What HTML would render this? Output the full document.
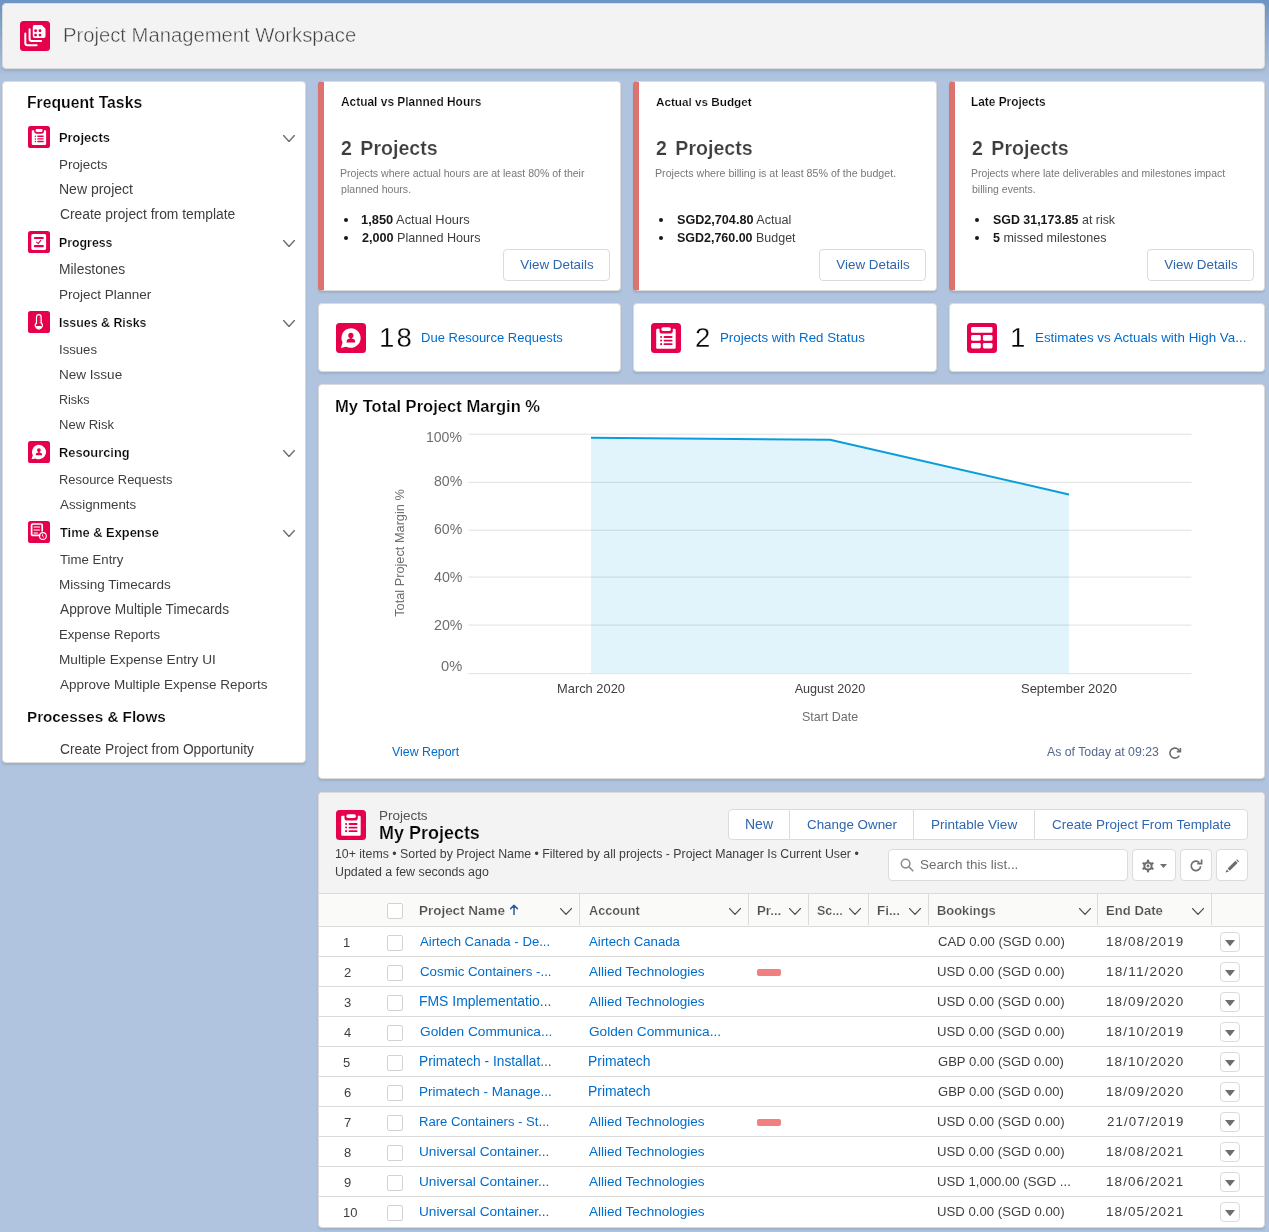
<!DOCTYPE html>
<html><head><meta charset="utf-8"><title>Project Management Workspace</title>
<style>
html,body{margin:0;padding:0;}
body{width:1269px;height:1232px;overflow:hidden;position:relative;font-family:"Liberation Sans",sans-serif;
background:linear-gradient(to bottom,#6c95c4 0px,#8fb0d6 40px,#b0c4df 80px,#b0c4df 100%);}
.t{position:absolute;white-space:nowrap;will-change:transform;}
.r{position:absolute;}
</style></head><body>
<div class="r" style="left:2px;top:3px;width:1263px;height:66px;background:#f3f3f3;border:1px solid #dddbda;border-radius:4px;box-sizing:border-box;box-shadow:0 2px 3px rgba(0,0,0,0.10);"></div>
<svg class="r" style="left:20px;top:21px" width="30" height="30" viewBox="0 0 30 30"><rect width="30" height="30" rx="3.5" fill="#e6004c"/>
<path d="M14.3 4 H21.8 L25.5 7.7 V15.2 a1.8 1.8 0 0 1 -1.8 1.8 H14.6 a1.8 1.8 0 0 1 -1.8 -1.8 V5.8 A1.8 1.8 0 0 1 14.3 4Z" fill="#fff"/>
<circle cx="15.6" cy="9.7" r="1.45" fill="#e6004c"/><circle cx="20" cy="9.7" r="1.45" fill="#e6004c"/>
<circle cx="15.6" cy="14.1" r="1.45" fill="#e6004c"/><circle cx="20" cy="14.1" r="1.45" fill="#e6004c"/>
<path d="M9.6 8.3 V17.8 a2.2 2.2 0 0 0 2.2 2.2 H21.1" fill="none" stroke="#fff" stroke-width="2" stroke-linecap="round"/>
<path d="M5.3 12.4 V22.1 a2.2 2.2 0 0 0 2.2 2.2 H16.6" fill="none" stroke="#fff" stroke-width="2" stroke-linecap="round"/></svg>
<div class="t" style="top:22px;font-size:20.24px;line-height:26px;color:#3e3e3c;left:62.60px;-webkit-text-stroke:0.45px #f3f3f3;">Project Management Workspace</div>
<div class="r" style="left:2px;top:81px;width:304px;height:682px;background:#fff;border:1px solid #dddbda;border-radius:4px;box-shadow:0 2px 2px rgba(0,0,0,0.10);box-sizing:border-box;"></div>
<div class="t" style="top:93px;font-size:15.74px;line-height:20px;color:#080707;font-weight:700;left:26.90px;-webkit-text-stroke:0.2px #fff;">Frequent Tasks</div>
<svg class="r" style="left:28px;top:126px" width="22" height="22" viewBox="0 0 22 22"><rect width="22" height="22" rx="2.6" fill="#e6004c"/>
<path d="M4.6 4.3 H6.2 V5.6 A2.1 2.1 0 0 0 8.3 7.7 H13.9 A2.1 2.1 0 0 0 16 5.6 V4.3 H17.3 A0.8 0.8 0 0 1 18.1 5.1 V18.1 A0.8 0.8 0 0 1 17.3 18.9 H4.6 A0.8 0.8 0 0 1 3.8 18.1 V5.1 A0.8 0.8 0 0 1 4.6 4.3Z" fill="#fff"/>
<rect x="7.6" y="3.1" width="7" height="2.8" rx="1.3" fill="#fff"/>
<circle cx="7.4" cy="10.3" r="0.75" fill="#e6004c"/><circle cx="7.4" cy="12.9" r="0.75" fill="#e6004c"/><circle cx="7.4" cy="15.5" r="0.75" fill="#e6004c"/>
<rect x="9.2" y="9.6" width="6.6" height="1.4" rx="0.7" fill="#e6004c"/><rect x="9.2" y="12.2" width="6.6" height="1.4" rx="0.7" fill="#e6004c"/><rect x="9.2" y="14.8" width="6.6" height="1.4" rx="0.7" fill="#e6004c"/></svg>
<div class="t" style="top:129px;font-size:12.9px;line-height:17px;color:#080707;font-weight:700;left:59.10px;-webkit-text-stroke:0.2px #fff;">Projects</div>
<svg class="r" style="left:283px;top:134.9px" width="12" height="7" viewBox="0 0 12 7"><path d="M0.6 0.6 L6.0 6.4 L11.4 0.6" fill="none" stroke="#706e6b" stroke-width="1.4" stroke-linecap="round" stroke-linejoin="round"/></svg>
<div class="t" style="top:156px;font-size:13.39px;line-height:17px;color:#3e3e3c;left:59.10px;">Projects</div>
<div class="t" style="top:180px;font-size:14.0px;line-height:18px;color:#3e3e3c;left:59.10px;">New project</div>
<div class="t" style="top:205px;font-size:13.83px;line-height:18px;color:#3e3e3c;left:60.10px;">Create project from template</div>
<svg class="r" style="left:28px;top:231px" width="22" height="22" viewBox="0 0 22 22"><rect width="22" height="22" rx="2.6" fill="#e6004c"/>
<rect x="3.3" y="3.1" width="14.8" height="15.8" rx="1.6" fill="#fff"/>
<rect x="5.8" y="5.9" width="10.1" height="2.2" rx="1.1" fill="#e6004c"/>
<rect x="5.8" y="14.1" width="10.1" height="2.2" rx="1.1" fill="#e6004c"/>
<path d="M8.6 11.2 L10.2 12.6 L12.8 9.4" fill="none" stroke="#e6004c" stroke-width="1.1" stroke-linecap="round" stroke-linejoin="round"/></svg>
<div class="t" style="top:235px;font-size:12.33px;line-height:16px;color:#080707;font-weight:700;left:59.10px;-webkit-text-stroke:0.2px #fff;">Progress</div>
<svg class="r" style="left:283px;top:239.9px" width="12" height="7" viewBox="0 0 12 7"><path d="M0.6 0.6 L6.0 6.4 L11.4 0.6" fill="none" stroke="#706e6b" stroke-width="1.4" stroke-linecap="round" stroke-linejoin="round"/></svg>
<div class="t" style="top:260px;font-size:13.85px;line-height:18px;color:#3e3e3c;left:59.10px;">Milestones</div>
<div class="t" style="top:286px;font-size:13.5px;line-height:17px;color:#3e3e3c;left:59.10px;">Project Planner</div>
<svg class="r" style="left:28px;top:311px" width="22" height="22" viewBox="0 0 22 22"><rect width="22" height="22" rx="2.6" fill="#e6004c"/>
<path d="M7.9 6 A2.95 2.95 0 0 1 13.8 6 V11.6 A4.05 4.05 0 1 1 7.9 11.6Z" fill="#fff"/>
<path d="M9.1 6.1 A1.75 1.75 0 0 1 12.6 6.1 V12.4 A2.85 2.85 0 1 1 9.1 12.4Z" fill="#e6004c"/>
<path d="M8 14.9 A2.85 2.85 0 0 0 13.7 14.9Z" fill="#fff"/>
<rect x="11.7" y="6.2" width="0.9" height="0.8" fill="#fff"/><rect x="11.7" y="8.7" width="0.9" height="0.8" fill="#fff"/><rect x="11.7" y="11.2" width="0.9" height="0.8" fill="#fff"/></svg>
<div class="t" style="top:315px;font-size:12.4px;line-height:16px;color:#080707;font-weight:700;left:59.10px;-webkit-text-stroke:0.2px #fff;">Issues &amp; Risks</div>
<svg class="r" style="left:283px;top:319.9px" width="12" height="7" viewBox="0 0 12 7"><path d="M0.6 0.6 L6.0 6.4 L11.4 0.6" fill="none" stroke="#706e6b" stroke-width="1.4" stroke-linecap="round" stroke-linejoin="round"/></svg>
<div class="t" style="top:341px;font-size:13.15px;line-height:17px;color:#3e3e3c;left:59.10px;">Issues</div>
<div class="t" style="top:366px;font-size:13.54px;line-height:17px;color:#3e3e3c;left:59.10px;">New Issue</div>
<div class="t" style="top:392px;font-size:12.5px;line-height:16px;color:#3e3e3c;left:59.10px;">Risks</div>
<div class="t" style="top:416px;font-size:13.02px;line-height:17px;color:#3e3e3c;left:59.10px;">New Risk</div>
<svg class="r" style="left:28px;top:441px" width="22" height="22" viewBox="0 0 22 22"><rect width="22" height="22" rx="2.6" fill="#e6004c"/>
<path d="M10.9 3.8 A7.3 7.2 0 1 1 7.4 17.4 L3.6 18.3 L4.8 14.3 A7.3 7.2 0 0 1 10.9 3.8Z" fill="#fff"/>
<circle cx="10.9" cy="9.1" r="1.9" fill="#e6004c"/>
<path d="M10.9 11.4 c-2.2 0 -3.1 0.9 -3.1 2.1 v0.8 h6.2 v-0.8 c0 -1.2 -0.9 -2.1 -3.1 -2.1Z" fill="#e6004c"/>
<rect x="10.2" y="10" width="1.4" height="2.4" fill="#e6004c"/></svg>
<div class="t" style="top:444px;font-size:12.84px;line-height:17px;color:#080707;font-weight:700;left:59.10px;-webkit-text-stroke:0.2px #fff;">Resourcing</div>
<svg class="r" style="left:283px;top:449.9px" width="12" height="7" viewBox="0 0 12 7"><path d="M0.6 0.6 L6.0 6.4 L11.4 0.6" fill="none" stroke="#706e6b" stroke-width="1.4" stroke-linecap="round" stroke-linejoin="round"/></svg>
<div class="t" style="top:471px;font-size:12.92px;line-height:17px;color:#3e3e3c;left:59.10px;">Resource Requests</div>
<div class="t" style="top:496px;font-size:13.32px;line-height:17px;color:#3e3e3c;left:60.10px;">Assignments</div>
<svg class="r" style="left:28px;top:521px" width="22" height="22" viewBox="0 0 22 22"><rect width="22" height="22" rx="2.6" fill="#e6004c"/>
<path d="M12.4 14.4 H4.8 A1.2 1.2 0 0 1 3.6 13.2 V4.2 A1.2 1.2 0 0 1 4.8 3 H13 A1.2 1.2 0 0 1 14.2 4.2 V10.6" fill="none" stroke="#fff" stroke-width="1.7"/>
<rect x="5.4" y="5.3" width="6.8" height="1.5" rx="0.7" fill="#fff" opacity="0.7"/>
<rect x="5.4" y="8.3" width="6.8" height="1.5" rx="0.7" fill="#fff" opacity="0.7"/>
<rect x="5.4" y="11.2" width="4.6" height="1.5" rx="0.7" fill="#fff" opacity="0.7"/>
<circle cx="14.9" cy="15" r="3.4" fill="none" stroke="#fff" stroke-width="1.1"/>
<path d="M14.6 13.2 V15.2 L15.8 16.3" fill="none" stroke="#fff" stroke-width="0.9"/></svg>
<div class="t" style="top:524px;font-size:12.83px;line-height:17px;color:#080707;font-weight:700;left:60.10px;-webkit-text-stroke:0.2px #fff;">Time &amp; Expense</div>
<svg class="r" style="left:283px;top:529.9px" width="12" height="7" viewBox="0 0 12 7"><path d="M0.6 0.6 L6.0 6.4 L11.4 0.6" fill="none" stroke="#706e6b" stroke-width="1.4" stroke-linecap="round" stroke-linejoin="round"/></svg>
<div class="t" style="top:551px;font-size:13.21px;line-height:17px;color:#3e3e3c;left:60.10px;">Time Entry</div>
<div class="t" style="top:576px;font-size:13.5px;line-height:17px;color:#3e3e3c;left:59.10px;">Missing Timecards</div>
<div class="t" style="top:601px;font-size:13.71px;line-height:18px;color:#3e3e3c;left:60.10px;">Approve Multiple Timecards</div>
<div class="t" style="top:626px;font-size:13.18px;line-height:17px;color:#3e3e3c;left:59.10px;">Expense Reports</div>
<div class="t" style="top:651px;font-size:13.64px;line-height:18px;color:#3e3e3c;left:59.10px;">Multiple Expense Entry UI</div>
<div class="t" style="top:676px;font-size:13.47px;line-height:17px;color:#3e3e3c;left:60.10px;">Approve Multiple Expense Reports</div>
<div class="t" style="top:707px;font-size:15.22px;line-height:20px;color:#080707;font-weight:700;left:26.90px;-webkit-text-stroke:0.2px #fff;">Processes &amp; Flows</div>
<div class="t" style="top:741px;font-size:13.74px;line-height:18px;color:#3e3e3c;left:60.10px;">Create Project from Opportunity</div>
<div class="r" style="left:318px;top:81px;width:303px;height:210px;background:#fff;border:1px solid #dddbda;border-radius:4px;box-shadow:0 2px 2px rgba(0,0,0,0.10);box-sizing:border-box;border-left:6px solid #dd7370;"></div>
<div class="t" style="top:95px;font-size:11.93px;line-height:15px;color:#080707;font-weight:700;left:340.90px;-webkit-text-stroke:0.2px #fff;">Actual vs Planned Hours</div>
<div class="t" style="top:136px;font-size:19.59px;line-height:25px;color:#3e3e3c;font-weight:700;left:340.90px;word-spacing:3px;-webkit-text-stroke:0.2px #fff;">2 Projects</div>
<div class="t" style="top:166px;font-size:10.56px;line-height:14px;color:#7a7876;left:339.90px;">Projects where actual hours are at least 80% of their</div>
<div class="t" style="top:182px;font-size:10.6px;line-height:14px;color:#7a7876;left:340.90px;">planned hours.</div>
<div class="r" style="left:344px;top:218px;width:4px;height:4px;background:#181818;border-radius:50%;"></div>
<div class="t" style="top:211px;font-size:12.86px;line-height:17px;color:#3e3e3c;left:361.00px;"><b style="color:#181818">1,850</b> Actual Hours</div>
<div class="r" style="left:344px;top:236px;width:4px;height:4px;background:#181818;border-radius:50%;"></div>
<div class="t" style="top:230px;font-size:12.64px;line-height:16px;color:#3e3e3c;left:362.00px;"><b style="color:#181818">2,000</b> Planned Hours</div>
<div class="r" style="left:503px;top:249px;width:107px;height:32px;background:#fff;border:1px solid #dddbda;border-radius:4px;box-sizing:border-box;"></div>
<div class="t" style="top:256px;font-size:13.4px;line-height:17px;color:#2f66ad;left:256.5px;width:600px;text-align:center;">View Details</div>
<div class="r" style="left:633px;top:81px;width:304px;height:210px;background:#fff;border:1px solid #dddbda;border-radius:4px;box-shadow:0 2px 2px rgba(0,0,0,0.10);box-sizing:border-box;border-left:6px solid #dd7370;"></div>
<div class="t" style="top:94px;font-size:11.71px;line-height:15px;color:#080707;font-weight:700;left:655.90px;-webkit-text-stroke:0.2px #fff;">Actual vs Budget</div>
<div class="t" style="top:136px;font-size:19.59px;line-height:25px;color:#3e3e3c;font-weight:700;left:655.90px;word-spacing:3px;-webkit-text-stroke:0.2px #fff;">2 Projects</div>
<div class="t" style="top:166px;font-size:10.66px;line-height:14px;color:#7a7876;left:654.90px;">Projects where billing is at least 85% of the budget.</div>
<div class="r" style="left:659px;top:218px;width:4px;height:4px;background:#181818;border-radius:50%;"></div>
<div class="t" style="top:212px;font-size:12.62px;line-height:16px;color:#3e3e3c;left:677.00px;"><b style="color:#181818">SGD2,704.80</b> Actual</div>
<div class="r" style="left:659px;top:236px;width:4px;height:4px;background:#181818;border-radius:50%;"></div>
<div class="t" style="top:230px;font-size:12.47px;line-height:16px;color:#3e3e3c;left:677.00px;"><b style="color:#181818">SGD2,760.00</b> Budget</div>
<div class="r" style="left:819px;top:249px;width:107px;height:32px;background:#fff;border:1px solid #dddbda;border-radius:4px;box-sizing:border-box;"></div>
<div class="t" style="top:256px;font-size:13.4px;line-height:17px;color:#2f66ad;left:572.5px;width:600px;text-align:center;">View Details</div>
<div class="r" style="left:949px;top:81px;width:316px;height:210px;background:#fff;border:1px solid #dddbda;border-radius:4px;box-shadow:0 2px 2px rgba(0,0,0,0.10);box-sizing:border-box;border-left:6px solid #dd7370;"></div>
<div class="t" style="top:95px;font-size:11.87px;line-height:15px;color:#080707;font-weight:700;left:970.90px;-webkit-text-stroke:0.2px #fff;">Late Projects</div>
<div class="t" style="top:136px;font-size:19.59px;line-height:25px;color:#3e3e3c;font-weight:700;left:971.90px;word-spacing:3px;-webkit-text-stroke:0.2px #fff;">2 Projects</div>
<div class="t" style="top:167px;font-size:10.45px;line-height:14px;color:#7a7876;left:970.90px;">Projects where late deliverables and milestones impact</div>
<div class="t" style="top:182px;font-size:10.53px;line-height:14px;color:#7a7876;left:971.90px;">billing events.</div>
<div class="r" style="left:975px;top:218px;width:4px;height:4px;background:#181818;border-radius:50%;"></div>
<div class="t" style="top:212px;font-size:12.42px;line-height:16px;color:#3e3e3c;left:993.00px;"><b style="color:#181818">SGD 31,173.85</b> at risk</div>
<div class="r" style="left:975px;top:236px;width:4px;height:4px;background:#181818;border-radius:50%;"></div>
<div class="t" style="top:230px;font-size:12.52px;line-height:16px;color:#3e3e3c;left:993.00px;"><b style="color:#181818">5</b> missed milestones</div>
<div class="r" style="left:1147px;top:249px;width:107px;height:32px;background:#fff;border:1px solid #dddbda;border-radius:4px;box-sizing:border-box;"></div>
<div class="t" style="top:256px;font-size:13.4px;line-height:17px;color:#2f66ad;left:900.5px;width:600px;text-align:center;">View Details</div>
<div class="r" style="left:318px;top:303px;width:303px;height:69px;background:#fff;border:1px solid #dddbda;border-radius:4px;box-shadow:0 2px 2px rgba(0,0,0,0.10);box-sizing:border-box;"></div>
<svg class="r" style="left:336px;top:323px" width="30" height="30" viewBox="0 0 22 22"><rect width="22" height="22" rx="2.6" fill="#e6004c"/>
<path d="M10.9 3.8 A7.3 7.2 0 1 1 7.4 17.4 L3.6 18.3 L4.8 14.3 A7.3 7.2 0 0 1 10.9 3.8Z" fill="#fff"/>
<circle cx="10.9" cy="9.1" r="1.9" fill="#e6004c"/>
<path d="M10.9 11.4 c-2.2 0 -3.1 0.9 -3.1 2.1 v0.8 h6.2 v-0.8 c0 -1.2 -0.9 -2.1 -3.1 -2.1Z" fill="#e6004c"/>
<rect x="10.2" y="10" width="1.4" height="2.4" fill="#e6004c"/></svg>
<div class="t" style="top:320px;font-size:27.6px;line-height:35px;color:#080707;left:378.90px;letter-spacing:2.2px;-webkit-text-stroke:0.3px #fff;">18</div>
<div class="t" style="top:329px;font-size:13.02px;line-height:17px;color:#006dcc;left:421.30px;">Due Resource Requests</div>
<div class="r" style="left:633px;top:303px;width:304px;height:69px;background:#fff;border:1px solid #dddbda;border-radius:4px;box-shadow:0 2px 2px rgba(0,0,0,0.10);box-sizing:border-box;"></div>
<svg class="r" style="left:651px;top:323px" width="30" height="30" viewBox="0 0 22 22"><rect width="22" height="22" rx="2.6" fill="#e6004c"/>
<path d="M4.6 4.3 H6.2 V5.6 A2.1 2.1 0 0 0 8.3 7.7 H13.9 A2.1 2.1 0 0 0 16 5.6 V4.3 H17.3 A0.8 0.8 0 0 1 18.1 5.1 V18.1 A0.8 0.8 0 0 1 17.3 18.9 H4.6 A0.8 0.8 0 0 1 3.8 18.1 V5.1 A0.8 0.8 0 0 1 4.6 4.3Z" fill="#fff"/>
<rect x="7.6" y="3.1" width="7" height="2.8" rx="1.3" fill="#fff"/>
<circle cx="7.4" cy="10.3" r="0.75" fill="#e6004c"/><circle cx="7.4" cy="12.9" r="0.75" fill="#e6004c"/><circle cx="7.4" cy="15.5" r="0.75" fill="#e6004c"/>
<rect x="9.2" y="9.6" width="6.6" height="1.4" rx="0.7" fill="#e6004c"/><rect x="9.2" y="12.2" width="6.6" height="1.4" rx="0.7" fill="#e6004c"/><rect x="9.2" y="14.8" width="6.6" height="1.4" rx="0.7" fill="#e6004c"/></svg>
<div class="t" style="top:320px;font-size:27.6px;line-height:35px;color:#080707;left:695.20px;-webkit-text-stroke:0.3px #fff;">2</div>
<div class="t" style="top:329px;font-size:13.31px;line-height:17px;color:#006dcc;left:719.60px;">Projects with Red Status</div>
<div class="r" style="left:949px;top:303px;width:316px;height:69px;background:#fff;border:1px solid #dddbda;border-radius:4px;box-shadow:0 2px 2px rgba(0,0,0,0.10);box-sizing:border-box;"></div>
<svg class="r" style="left:967px;top:323px" width="30" height="30" viewBox="0 0 30 30"><rect width="30" height="30" rx="3.5" fill="#e6004c"/>
<rect x="4.1" y="4.1" width="21.4" height="5.7" rx="1.4" fill="#fff"/>
<rect x="4.1" y="12.1" width="9.7" height="5.6" rx="1.4" fill="#fff"/>
<rect x="15.9" y="12.1" width="9.6" height="5.6" rx="1.4" fill="#fff"/>
<rect x="4.1" y="19.9" width="9.7" height="5.6" rx="1.4" fill="#fff"/>
<rect x="15.9" y="19.9" width="9.6" height="5.6" rx="1.4" fill="#fff"/></svg>
<div class="t" style="top:320px;font-size:27.6px;line-height:35px;color:#080707;left:1010.40px;-webkit-text-stroke:0.3px #fff;">1</div>
<div class="t" style="top:329px;font-size:13.36px;line-height:17px;color:#006dcc;left:1035.40px;">Estimates vs Actuals with High Va...</div>
<div class="r" style="left:318px;top:384px;width:947px;height:395px;background:#fff;border:1px solid #dddbda;border-radius:4px;box-shadow:0 2px 2px rgba(0,0,0,0.10);box-sizing:border-box;"></div>
<div class="t" style="top:396px;font-size:16.58px;line-height:21px;color:#080707;font-weight:700;left:335.20px;-webkit-text-stroke:0.2px #fff;">My Total Project Margin %</div>
<svg class="r" style="left:0px;top:0px" width="1269" height="1232" viewBox="0 0 1269 1232"><path d="M591 437.8 L830 439.7 L1069 494.5 L1069 673.1 L591 673.1Z" fill="#e1f3fb"/><rect x="468.5" y="433.7" width="723" height="1" fill="#000" fill-opacity="0.12"/><rect x="468.5" y="481.9" width="723" height="1" fill="#000" fill-opacity="0.12"/><rect x="468.5" y="529.7" width="723" height="1" fill="#000" fill-opacity="0.12"/><rect x="468.5" y="576.6" width="723" height="1" fill="#000" fill-opacity="0.12"/><rect x="468.5" y="624.6" width="723" height="1" fill="#000" fill-opacity="0.12"/><rect x="468.5" y="673.1" width="723" height="1" fill="#000" fill-opacity="0.12"/><path d="M591 437.8 L830 439.7 L1069 494.5" fill="none" stroke="#0a9ddb" stroke-width="2" stroke-linejoin="round"/></svg>
<div class="t" style="top:428px;font-size:14.05px;line-height:18px;color:#706e6b;right:806.7px;text-align:right;">100%</div>
<div class="t" style="top:472px;font-size:14.13px;line-height:18px;color:#706e6b;right:806.7px;text-align:right;">80%</div>
<div class="t" style="top:520px;font-size:14.13px;line-height:18px;color:#706e6b;right:806.7px;text-align:right;">60%</div>
<div class="t" style="top:568px;font-size:14.24px;line-height:18px;color:#706e6b;right:806.7px;text-align:right;">40%</div>
<div class="t" style="top:616px;font-size:14.24px;line-height:18px;color:#706e6b;right:806.7px;text-align:right;">20%</div>
<div class="t" style="top:657px;font-size:14.67px;line-height:19px;color:#706e6b;right:806.7px;text-align:right;">0%</div>
<div class="t" style="left:300.2px;top:545.8px;width:200px;height:14px;font-size:12.75px;line-height:14px;color:#706e6b;text-align:center;transform:rotate(-90deg);transform-origin:100px 7px;white-space:nowrap">Total Project Margin %</div>
<div class="t" style="top:680px;font-size:12.87px;line-height:17px;color:#3e3e3c;left:290.70000000000005px;width:600px;text-align:center;">March 2020</div>
<div class="t" style="top:681px;font-size:12.6px;line-height:16px;color:#3e3e3c;left:529.5px;width:600px;text-align:center;">August 2020</div>
<div class="t" style="top:680px;font-size:12.99px;line-height:17px;color:#3e3e3c;left:769.2px;width:600px;text-align:center;">September 2020</div>
<div class="t" style="top:709px;font-size:12.49px;line-height:16px;color:#706e6b;left:529.8px;width:600px;text-align:center;">Start Date</div>
<div class="t" style="top:744px;font-size:12.36px;line-height:16px;color:#006dcc;left:391.60px;">View Report</div>
<div class="t" style="top:744px;font-size:12.31px;line-height:16px;color:#54698d;left:1047.30px;">As of Today at 09:23</div>
<svg class="r" style="left:1167px;top:745px" width="16" height="16" viewBox="0 0 16 16"><path d="M12.5 6.2 A5 5 0 1 0 12.2 10.6" fill="none" stroke="#706e6b" stroke-width="1.6"/><path d="M9.8 6.6 H13.4 V3" fill="none" stroke="#706e6b" stroke-width="1.6"/></svg>
<div class="r" style="left:318px;top:792px;width:947px;height:436px;background:#fff;border:1px solid #dddbda;border-radius:4px;box-shadow:0 2px 2px rgba(0,0,0,0.10);box-sizing:border-box;overflow:hidden;"></div>
<div class="r" style="left:319px;top:793px;width:945px;height:100px;background:#f3f3f3;border-radius:4px 4px 0 0;"></div>
<svg class="r" style="left:336px;top:810px" width="30" height="30" viewBox="0 0 22 22"><rect width="22" height="22" rx="2.6" fill="#e6004c"/>
<path d="M4.6 4.3 H6.2 V5.6 A2.1 2.1 0 0 0 8.3 7.7 H13.9 A2.1 2.1 0 0 0 16 5.6 V4.3 H17.3 A0.8 0.8 0 0 1 18.1 5.1 V18.1 A0.8 0.8 0 0 1 17.3 18.9 H4.6 A0.8 0.8 0 0 1 3.8 18.1 V5.1 A0.8 0.8 0 0 1 4.6 4.3Z" fill="#fff"/>
<rect x="7.6" y="3.1" width="7" height="2.8" rx="1.3" fill="#fff"/>
<circle cx="7.4" cy="10.3" r="0.75" fill="#e6004c"/><circle cx="7.4" cy="12.9" r="0.75" fill="#e6004c"/><circle cx="7.4" cy="15.5" r="0.75" fill="#e6004c"/>
<rect x="9.2" y="9.6" width="6.6" height="1.4" rx="0.7" fill="#e6004c"/><rect x="9.2" y="12.2" width="6.6" height="1.4" rx="0.7" fill="#e6004c"/><rect x="9.2" y="14.8" width="6.6" height="1.4" rx="0.7" fill="#e6004c"/></svg>
<div class="t" style="top:807px;font-size:13.46px;line-height:17px;color:#54524f;left:378.70px;">Projects</div>
<div class="t" style="top:822px;font-size:17.98px;line-height:23px;color:#080707;font-weight:700;left:378.70px;-webkit-text-stroke:0.2px #f3f3f3;">My Projects</div>
<div class="t" style="top:846px;font-size:12.35px;line-height:16px;color:#3e3e3c;left:335.00px;">10+ items • Sorted by Project Name • Filtered by all projects - Project Manager Is Current User •</div>
<div class="t" style="top:864px;font-size:12.41px;line-height:16px;color:#3e3e3c;left:335.00px;">Updated a few seconds ago</div>
<div class="r" style="left:728px;top:809px;width:520px;height:31px;background:#fff;border:1px solid #dddbda;border-radius:4px;box-sizing:border-box;"></div>
<div class="r" style="left:789px;top:810px;width:1px;height:29px;background:#dddbda;"></div>
<div class="r" style="left:913px;top:810px;width:1px;height:29px;background:#dddbda;"></div>
<div class="r" style="left:1034px;top:810px;width:1px;height:29px;background:#dddbda;"></div>
<div class="t" style="top:815px;font-size:14.01px;line-height:18px;color:#2f66ad;left:744.50px;">New</div>
<div class="t" style="top:816px;font-size:13.39px;line-height:17px;color:#2f66ad;left:807.00px;">Change Owner</div>
<div class="t" style="top:816px;font-size:13.52px;line-height:17px;color:#2f66ad;left:930.60px;">Printable View</div>
<div class="t" style="top:816px;font-size:13.44px;line-height:17px;color:#2f66ad;left:1051.50px;">Create Project From Template</div>
<div class="r" style="left:888px;top:849px;width:239.5px;height:31.5px;background:#fff;border:1px solid #dddbda;border-radius:4px;box-sizing:border-box;"></div>
<svg class="r" style="left:900px;top:858px" width="14" height="14" viewBox="0 0 14 14"><circle cx="5.6" cy="5.6" r="4.3" fill="none" stroke="#8c8a88" stroke-width="1.5"/><path d="M8.8 8.8 L12.8 12.8" stroke="#8c8a88" stroke-width="1.6" stroke-linecap="round"/></svg>
<div class="t" style="top:856px;font-size:13.42px;line-height:17px;color:#706e6b;left:920.30px;">Search this list...</div>
<div class="r" style="left:1132px;top:849px;width:43.5px;height:31.5px;background:#fff;border:1px solid #dddbda;border-radius:4px;box-sizing:border-box;"></div>
<div class="r" style="left:1180px;top:849px;width:31.5px;height:31.5px;background:#fff;border:1px solid #dddbda;border-radius:4px;box-sizing:border-box;"></div>
<div class="r" style="left:1216px;top:849px;width:31.5px;height:31.5px;background:#fff;border:1px solid #dddbda;border-radius:4px;box-sizing:border-box;"></div>
<svg class="r" style="left:1141px;top:859px" width="14" height="14" viewBox="0 0 14 14"><g fill="#706e6b"><circle cx="7" cy="7" r="4.6"/><rect x="5.9" y="0.6" width="2.2" height="12.8" rx="1"/><rect x="5.9" y="0.6" width="2.2" height="12.8" rx="1" transform="rotate(60 7 7)"/><rect x="5.9" y="0.6" width="2.2" height="12.8" rx="1" transform="rotate(120 7 7)"/></g><circle cx="7" cy="7" r="2.6" fill="#fff"/><circle cx="7" cy="7" r="1.4" fill="#706e6b"/></svg>
<svg class="r" style="left:1160px;top:864px" width="7" height="4" viewBox="0 0 7 4"><path d="M0 0 H7 L3.5 4Z" fill="#706e6b"/></svg>
<svg class="r" style="left:1189px;top:859px" width="14" height="14" viewBox="0 0 14 14"><path d="M11.6 7.2 A4.7 4.7 0 1 1 10.3 3.6" fill="none" stroke="#706e6b" stroke-width="1.7"/><path d="M8.3 4.6 H12.6 V0.6" fill="none" stroke="#706e6b" stroke-width="1.7"/></svg>
<svg class="r" style="left:1224px;top:858px" width="16" height="16" viewBox="0 0 16 16"><path d="M3.6 10.6 L11.4 2.8 L13.6 5 L5.8 12.8Z" fill="#706e6b"/><path d="M12.1 2.1 L13 1.2 L15.2 3.4 L14.3 4.3Z" fill="#706e6b"/><path d="M1.4 14.6 L2.9 11.4 L4.9 13.4Z" fill="#706e6b"/></svg>
<div class="r" style="left:319px;top:893px;width:945px;height:34px;background:#fafaf9;border-top:1px solid #dddbda;border-bottom:1px solid #dddbda;box-sizing:border-box;"></div>
<div class="r" style="left:579px;top:894px;width:1px;height:31px;background:#dddbda;"></div>
<div class="r" style="left:748px;top:894px;width:1px;height:31px;background:#dddbda;"></div>
<div class="r" style="left:808px;top:894px;width:1px;height:31px;background:#dddbda;"></div>
<div class="r" style="left:868px;top:894px;width:1px;height:31px;background:#dddbda;"></div>
<div class="r" style="left:928px;top:894px;width:1px;height:31px;background:#dddbda;"></div>
<div class="r" style="left:1097px;top:894px;width:1px;height:31px;background:#dddbda;"></div>
<div class="r" style="left:1211px;top:894px;width:1px;height:31px;background:#dddbda;"></div>
<div class="r" style="left:387px;top:903px;width:16px;height:16px;background:#fff;border:1px solid #d5d3d1;border-radius:2px;box-sizing:border-box;"></div>
<div class="t" style="top:902px;font-size:13.44px;line-height:17px;color:#514f4d;font-weight:700;left:418.80px;-webkit-text-stroke:0.2px #fafaf9;">Project Name</div>
<svg class="r" style="left:560.3px;top:907.5px" width="12" height="7" viewBox="0 0 12 7"><path d="M0.6 0.6 L6.0 6.4 L11.4 0.6" fill="none" stroke="#514f4d" stroke-width="1.3" stroke-linecap="round" stroke-linejoin="round"/></svg>
<div class="t" style="top:903px;font-size:12.7px;line-height:16px;color:#514f4d;font-weight:700;left:588.70px;-webkit-text-stroke:0.2px #fafaf9;">Account</div>
<svg class="r" style="left:728.9px;top:907.5px" width="12" height="7" viewBox="0 0 12 7"><path d="M0.6 0.6 L6.0 6.4 L11.4 0.6" fill="none" stroke="#514f4d" stroke-width="1.3" stroke-linecap="round" stroke-linejoin="round"/></svg>
<div class="t" style="top:902px;font-size:13.24px;line-height:17px;color:#514f4d;font-weight:700;left:756.80px;-webkit-text-stroke:0.2px #fafaf9;">Pr...</div>
<svg class="r" style="left:789.2px;top:907.5px" width="12" height="7" viewBox="0 0 12 7"><path d="M0.6 0.6 L6.0 6.4 L11.4 0.6" fill="none" stroke="#514f4d" stroke-width="1.3" stroke-linecap="round" stroke-linejoin="round"/></svg>
<div class="t" style="top:903px;font-size:12.49px;line-height:16px;color:#514f4d;font-weight:700;left:816.60px;-webkit-text-stroke:0.2px #fafaf9;">Sc...</div>
<svg class="r" style="left:849.3px;top:907.5px" width="12" height="7" viewBox="0 0 12 7"><path d="M0.6 0.6 L6.0 6.4 L11.4 0.6" fill="none" stroke="#514f4d" stroke-width="1.3" stroke-linecap="round" stroke-linejoin="round"/></svg>
<div class="t" style="top:902px;font-size:13.4px;line-height:17px;color:#514f4d;font-weight:700;left:877.00px;-webkit-text-stroke:0.2px #fafaf9;">Fi...</div>
<svg class="r" style="left:909.1px;top:907.5px" width="12" height="7" viewBox="0 0 12 7"><path d="M0.6 0.6 L6.0 6.4 L11.4 0.6" fill="none" stroke="#514f4d" stroke-width="1.3" stroke-linecap="round" stroke-linejoin="round"/></svg>
<div class="t" style="top:902px;font-size:12.91px;line-height:17px;color:#514f4d;font-weight:700;left:936.60px;-webkit-text-stroke:0.2px #fafaf9;">Bookings</div>
<svg class="r" style="left:1078.7px;top:907.5px" width="12" height="7" viewBox="0 0 12 7"><path d="M0.6 0.6 L6.0 6.4 L11.4 0.6" fill="none" stroke="#514f4d" stroke-width="1.3" stroke-linecap="round" stroke-linejoin="round"/></svg>
<div class="t" style="top:902px;font-size:13.14px;line-height:17px;color:#514f4d;font-weight:700;left:1105.80px;-webkit-text-stroke:0.2px #fafaf9;">End Date</div>
<svg class="r" style="left:1192.3px;top:907.5px" width="12" height="7" viewBox="0 0 12 7"><path d="M0.6 0.6 L6.0 6.4 L11.4 0.6" fill="none" stroke="#514f4d" stroke-width="1.3" stroke-linecap="round" stroke-linejoin="round"/></svg>
<svg class="r" style="left:509px;top:904px" width="10" height="11" viewBox="0 0 10 11"><path d="M5 10.5 V1.5 M1.6 4.6 L5 1.2 L8.4 4.6" fill="none" stroke="#2a5e9f" stroke-width="1.5" stroke-linecap="round" stroke-linejoin="round"/></svg>
<div class="r" style="left:319px;top:956px;width:945px;height:1px;background:#dddbda;"></div>
<div class="t" style="top:934px;font-size:13px;line-height:17px;color:#3e3e3c;left:343.20px;">1</div>
<div class="r" style="left:387px;top:935px;width:16px;height:16px;background:#fff;border:1px solid #d5d3d1;border-radius:2px;box-sizing:border-box;"></div>
<div class="t" style="top:933px;font-size:13.16px;line-height:17px;color:#006dcc;left:419.80px;">Airtech Canada - De...</div>
<div class="t" style="top:933px;font-size:13.2px;line-height:17px;color:#006dcc;left:588.70px;">Airtech Canada</div>
<div class="t" style="top:933px;font-size:13.12px;line-height:17px;color:#3e3e3c;left:937.70px;">CAD 0.00 (SGD 0.00)</div>
<div class="t" style="top:933px;font-size:13.45px;line-height:17px;color:#3e3e3c;left:1105.90px;letter-spacing:1.1px;">18/08/2019</div>
<div class="r" style="left:1220px;top:932px;width:20px;height:20px;background:#fff;border:1px solid #dddbda;border-radius:4px;box-sizing:border-box;"></div>
<svg class="r" style="left:1225px;top:939px" width="10" height="8" viewBox="0 0 10 8"><path d="M0 1 H10 L5 7.2Z" fill="#706e6b"/></svg>
<div class="r" style="left:319px;top:986px;width:945px;height:1px;background:#dddbda;"></div>
<div class="t" style="top:964px;font-size:13px;line-height:17px;color:#3e3e3c;left:344.20px;">2</div>
<div class="r" style="left:387px;top:965px;width:16px;height:16px;background:#fff;border:1px solid #d5d3d1;border-radius:2px;box-sizing:border-box;"></div>
<div class="t" style="top:963px;font-size:13.3px;line-height:17px;color:#006dcc;left:419.80px;">Cosmic Containers -...</div>
<div class="t" style="top:963px;font-size:13.54px;line-height:17px;color:#006dcc;left:588.70px;">Allied Technologies</div>
<div class="r" style="left:757px;top:969.3px;width:24px;height:6.5px;background:#f08080;border-radius:2px;"></div>
<div class="t" style="top:963px;font-size:13.2px;line-height:17px;color:#3e3e3c;left:936.70px;">USD 0.00 (SGD 0.00)</div>
<div class="t" style="top:963px;font-size:13.64px;line-height:18px;color:#3e3e3c;left:1105.90px;letter-spacing:1.1px;">18/11/2020</div>
<div class="r" style="left:1220px;top:962px;width:20px;height:20px;background:#fff;border:1px solid #dddbda;border-radius:4px;box-sizing:border-box;"></div>
<svg class="r" style="left:1225px;top:969px" width="10" height="8" viewBox="0 0 10 8"><path d="M0 1 H10 L5 7.2Z" fill="#706e6b"/></svg>
<div class="r" style="left:319px;top:1016px;width:945px;height:1px;background:#dddbda;"></div>
<div class="t" style="top:994px;font-size:13px;line-height:17px;color:#3e3e3c;left:344.20px;">3</div>
<div class="r" style="left:387px;top:995px;width:16px;height:16px;background:#fff;border:1px solid #d5d3d1;border-radius:2px;box-sizing:border-box;"></div>
<div class="t" style="top:992px;font-size:13.95px;line-height:18px;color:#006dcc;left:418.80px;">FMS Implementatio...</div>
<div class="t" style="top:993px;font-size:13.54px;line-height:17px;color:#006dcc;left:588.70px;">Allied Technologies</div>
<div class="t" style="top:993px;font-size:13.2px;line-height:17px;color:#3e3e3c;left:936.70px;">USD 0.00 (SGD 0.00)</div>
<div class="t" style="top:993px;font-size:13.45px;line-height:17px;color:#3e3e3c;left:1105.90px;letter-spacing:1.1px;">18/09/2020</div>
<div class="r" style="left:1220px;top:992px;width:20px;height:20px;background:#fff;border:1px solid #dddbda;border-radius:4px;box-sizing:border-box;"></div>
<svg class="r" style="left:1225px;top:999px" width="10" height="8" viewBox="0 0 10 8"><path d="M0 1 H10 L5 7.2Z" fill="#706e6b"/></svg>
<div class="r" style="left:319px;top:1046px;width:945px;height:1px;background:#dddbda;"></div>
<div class="t" style="top:1024px;font-size:13px;line-height:17px;color:#3e3e3c;left:344.20px;">4</div>
<div class="r" style="left:387px;top:1025px;width:16px;height:16px;background:#fff;border:1px solid #d5d3d1;border-radius:2px;box-sizing:border-box;"></div>
<div class="t" style="top:1023px;font-size:13.69px;line-height:18px;color:#006dcc;left:419.80px;">Golden Communica...</div>
<div class="t" style="top:1023px;font-size:13.67px;line-height:18px;color:#006dcc;left:588.70px;">Golden Communica...</div>
<div class="t" style="top:1023px;font-size:13.2px;line-height:17px;color:#3e3e3c;left:936.70px;">USD 0.00 (SGD 0.00)</div>
<div class="t" style="top:1023px;font-size:13.45px;line-height:17px;color:#3e3e3c;left:1105.90px;letter-spacing:1.1px;">18/10/2019</div>
<div class="r" style="left:1220px;top:1022px;width:20px;height:20px;background:#fff;border:1px solid #dddbda;border-radius:4px;box-sizing:border-box;"></div>
<svg class="r" style="left:1225px;top:1029px" width="10" height="8" viewBox="0 0 10 8"><path d="M0 1 H10 L5 7.2Z" fill="#706e6b"/></svg>
<div class="r" style="left:319px;top:1076px;width:945px;height:1px;background:#dddbda;"></div>
<div class="t" style="top:1054px;font-size:13px;line-height:17px;color:#3e3e3c;left:343.20px;">5</div>
<div class="r" style="left:387px;top:1055px;width:16px;height:16px;background:#fff;border:1px solid #d5d3d1;border-radius:2px;box-sizing:border-box;"></div>
<div class="t" style="top:1053px;font-size:13.73px;line-height:18px;color:#006dcc;left:418.80px;">Primatech - Installat...</div>
<div class="t" style="top:1052px;font-size:13.9px;line-height:18px;color:#006dcc;left:587.70px;">Primatech</div>
<div class="t" style="top:1053px;font-size:13.04px;line-height:17px;color:#3e3e3c;left:937.70px;">GBP 0.00 (SGD 0.00)</div>
<div class="t" style="top:1053px;font-size:13.45px;line-height:17px;color:#3e3e3c;left:1105.90px;letter-spacing:1.1px;">18/10/2020</div>
<div class="r" style="left:1220px;top:1052px;width:20px;height:20px;background:#fff;border:1px solid #dddbda;border-radius:4px;box-sizing:border-box;"></div>
<svg class="r" style="left:1225px;top:1059px" width="10" height="8" viewBox="0 0 10 8"><path d="M0 1 H10 L5 7.2Z" fill="#706e6b"/></svg>
<div class="r" style="left:319px;top:1106px;width:945px;height:1px;background:#dddbda;"></div>
<div class="t" style="top:1084px;font-size:13px;line-height:17px;color:#3e3e3c;left:344.20px;">6</div>
<div class="r" style="left:387px;top:1085px;width:16px;height:16px;background:#fff;border:1px solid #d5d3d1;border-radius:2px;box-sizing:border-box;"></div>
<div class="t" style="top:1083px;font-size:13.51px;line-height:17px;color:#006dcc;left:418.80px;">Primatech - Manage...</div>
<div class="t" style="top:1082px;font-size:13.9px;line-height:18px;color:#006dcc;left:587.70px;">Primatech</div>
<div class="t" style="top:1083px;font-size:13.04px;line-height:17px;color:#3e3e3c;left:937.70px;">GBP 0.00 (SGD 0.00)</div>
<div class="t" style="top:1083px;font-size:13.45px;line-height:17px;color:#3e3e3c;left:1105.90px;letter-spacing:1.1px;">18/09/2020</div>
<div class="r" style="left:1220px;top:1082px;width:20px;height:20px;background:#fff;border:1px solid #dddbda;border-radius:4px;box-sizing:border-box;"></div>
<svg class="r" style="left:1225px;top:1089px" width="10" height="8" viewBox="0 0 10 8"><path d="M0 1 H10 L5 7.2Z" fill="#706e6b"/></svg>
<div class="r" style="left:319px;top:1136px;width:945px;height:1px;background:#dddbda;"></div>
<div class="t" style="top:1114px;font-size:13px;line-height:17px;color:#3e3e3c;left:344.20px;">7</div>
<div class="r" style="left:387px;top:1115px;width:16px;height:16px;background:#fff;border:1px solid #d5d3d1;border-radius:2px;box-sizing:border-box;"></div>
<div class="t" style="top:1113px;font-size:13.12px;line-height:17px;color:#006dcc;left:418.80px;">Rare Containers - St...</div>
<div class="t" style="top:1113px;font-size:13.54px;line-height:17px;color:#006dcc;left:588.70px;">Allied Technologies</div>
<div class="r" style="left:757px;top:1119.3px;width:24px;height:6.5px;background:#f08080;border-radius:2px;"></div>
<div class="t" style="top:1113px;font-size:13.2px;line-height:17px;color:#3e3e3c;left:936.70px;">USD 0.00 (SGD 0.00)</div>
<div class="t" style="top:1113px;font-size:13.28px;line-height:17px;color:#3e3e3c;left:1106.90px;letter-spacing:1.1px;">21/07/2019</div>
<div class="r" style="left:1220px;top:1112px;width:20px;height:20px;background:#fff;border:1px solid #dddbda;border-radius:4px;box-sizing:border-box;"></div>
<svg class="r" style="left:1225px;top:1119px" width="10" height="8" viewBox="0 0 10 8"><path d="M0 1 H10 L5 7.2Z" fill="#706e6b"/></svg>
<div class="r" style="left:319px;top:1166px;width:945px;height:1px;background:#dddbda;"></div>
<div class="t" style="top:1144px;font-size:13px;line-height:17px;color:#3e3e3c;left:344.20px;">8</div>
<div class="r" style="left:387px;top:1145px;width:16px;height:16px;background:#fff;border:1px solid #d5d3d1;border-radius:2px;box-sizing:border-box;"></div>
<div class="t" style="top:1143px;font-size:13.65px;line-height:18px;color:#006dcc;left:418.80px;">Universal Container...</div>
<div class="t" style="top:1143px;font-size:13.54px;line-height:17px;color:#006dcc;left:588.70px;">Allied Technologies</div>
<div class="t" style="top:1143px;font-size:13.2px;line-height:17px;color:#3e3e3c;left:936.70px;">USD 0.00 (SGD 0.00)</div>
<div class="t" style="top:1143px;font-size:13.45px;line-height:17px;color:#3e3e3c;left:1105.90px;letter-spacing:1.1px;">18/08/2021</div>
<div class="r" style="left:1220px;top:1142px;width:20px;height:20px;background:#fff;border:1px solid #dddbda;border-radius:4px;box-sizing:border-box;"></div>
<svg class="r" style="left:1225px;top:1149px" width="10" height="8" viewBox="0 0 10 8"><path d="M0 1 H10 L5 7.2Z" fill="#706e6b"/></svg>
<div class="r" style="left:319px;top:1196px;width:945px;height:1px;background:#dddbda;"></div>
<div class="t" style="top:1174px;font-size:13px;line-height:17px;color:#3e3e3c;left:344.20px;">9</div>
<div class="r" style="left:387px;top:1175px;width:16px;height:16px;background:#fff;border:1px solid #d5d3d1;border-radius:2px;box-sizing:border-box;"></div>
<div class="t" style="top:1173px;font-size:13.65px;line-height:18px;color:#006dcc;left:418.80px;">Universal Container...</div>
<div class="t" style="top:1173px;font-size:13.54px;line-height:17px;color:#006dcc;left:588.70px;">Allied Technologies</div>
<div class="t" style="top:1173px;font-size:13.16px;line-height:17px;color:#3e3e3c;left:936.70px;">USD 1,000.00 (SGD ...</div>
<div class="t" style="top:1173px;font-size:13.45px;line-height:17px;color:#3e3e3c;left:1105.90px;letter-spacing:1.1px;">18/06/2021</div>
<div class="r" style="left:1220px;top:1172px;width:20px;height:20px;background:#fff;border:1px solid #dddbda;border-radius:4px;box-sizing:border-box;"></div>
<svg class="r" style="left:1225px;top:1179px" width="10" height="8" viewBox="0 0 10 8"><path d="M0 1 H10 L5 7.2Z" fill="#706e6b"/></svg>
<div class="t" style="top:1204px;font-size:13px;line-height:17px;color:#3e3e3c;left:343.20px;">10</div>
<div class="r" style="left:387px;top:1205px;width:16px;height:16px;background:#fff;border:1px solid #d5d3d1;border-radius:2px;box-sizing:border-box;"></div>
<div class="t" style="top:1203px;font-size:13.65px;line-height:18px;color:#006dcc;left:418.80px;">Universal Container...</div>
<div class="t" style="top:1203px;font-size:13.54px;line-height:17px;color:#006dcc;left:588.70px;">Allied Technologies</div>
<div class="t" style="top:1203px;font-size:13.2px;line-height:17px;color:#3e3e3c;left:936.70px;">USD 0.00 (SGD 0.00)</div>
<div class="t" style="top:1203px;font-size:13.45px;line-height:17px;color:#3e3e3c;left:1105.90px;letter-spacing:1.1px;">18/05/2021</div>
<div class="r" style="left:1220px;top:1202px;width:20px;height:20px;background:#fff;border:1px solid #dddbda;border-radius:4px;box-sizing:border-box;"></div>
<svg class="r" style="left:1225px;top:1209px" width="10" height="8" viewBox="0 0 10 8"><path d="M0 1 H10 L5 7.2Z" fill="#706e6b"/></svg>
</body></html>
